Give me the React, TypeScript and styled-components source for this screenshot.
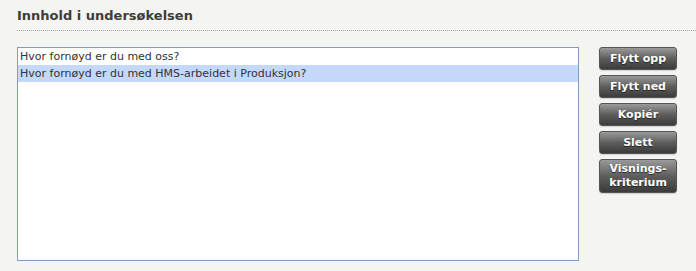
import React from "react"
import styled, { createGlobalStyle } from "styled-components"
import { useState } from "react"

const GlobalStyle = createGlobalStyle`
    html, body {
        margin: 0;
        padding: 0;
        background-color: #f4f4f2;
        font-family: "DejaVu Sans", Verdana, sans-serif;
    }
`;

const questions = [
    "Hvor fornøyd er du med oss?",
    "Hvor fornøyd er du med HMS-arbeidet i Produksjon?",
];

const actions = ["Flytt opp", "Flytt ned", "Kopiér", "Slett", "Visnings-\nkriterium"];

const App = () => {
    const [selected, setSelected] = useState(1)

    return(
        <Page>
            <GlobalStyle />
            <Title>Innhold i undersøkelsen</Title>
            <Content>
                <ListBox>
                    {questions.map((q, i) => (
                        <Row key={i} $active={i === selected} onClick={() => setSelected(i)}>{q}</Row>
                    ))}
                </ListBox>
                <Buttons>
                    {actions.map((a) => (
                        <ActionButton key={a}>{a}</ActionButton>
                    ))}
                </Buttons>
            </Content>
        </Page>
    );
}

const Page = styled.div`
    width: 696px;
    height: 271px;
    box-sizing: border-box;
    padding: 8px 0 0 17px;
    background-color: #f4f4f2;
`;

const Title = styled.h2`
    margin: 0;
    padding-bottom: 6px;
    font-size: 13px;
    font-weight: bold;
    color: #3d3d3a;
    line-height: 16px;
    border-bottom: 1px dotted #a8a8a8;
`;

const Content = styled.div`
    display: flex;
    margin-top: 16px;
`;

const ListBox = styled.div`
    width: 562px;
    height: 214px;
    box-sizing: border-box;
    border: 1px solid #7f9dc4;
    background-color: #ffffff;
`;

const Row = styled.div<{ $active: boolean }>`
    height: 17px;
    line-height: 17px;
    padding-left: 2px;
    font-size: 11px;
    color: #333333;
    background-color: ${(p) => (p.$active ? "#c4d8fc" : "transparent")};
    cursor: default;
`;

const Buttons = styled.div`
    display: flex;
    flex-direction: column;
    gap: 5px;
    margin-left: 20px;
`;

const ActionButton = styled.button`
    width: 78px;
    min-height: 23px;
    padding: 2px 4px 2px 4px;
    box-sizing: border-box;
    border: 1px solid #555555;
    border-radius: 3px;
    background: linear-gradient(#9a9a9a, #5e5e5e 50%, #3b3b3b);
    color: #ffffff;
    font-family: "DejaVu Sans", Verdana, sans-serif;
    font-size: 11px;
    font-weight: bold;
    line-height: 14px;
    white-space: pre-line;
    text-shadow: 0 1px 1px #222222;
    box-shadow: 0 1px 1px rgba(0, 0, 0, 0.15);
    cursor: pointer;
`;

export default App;
